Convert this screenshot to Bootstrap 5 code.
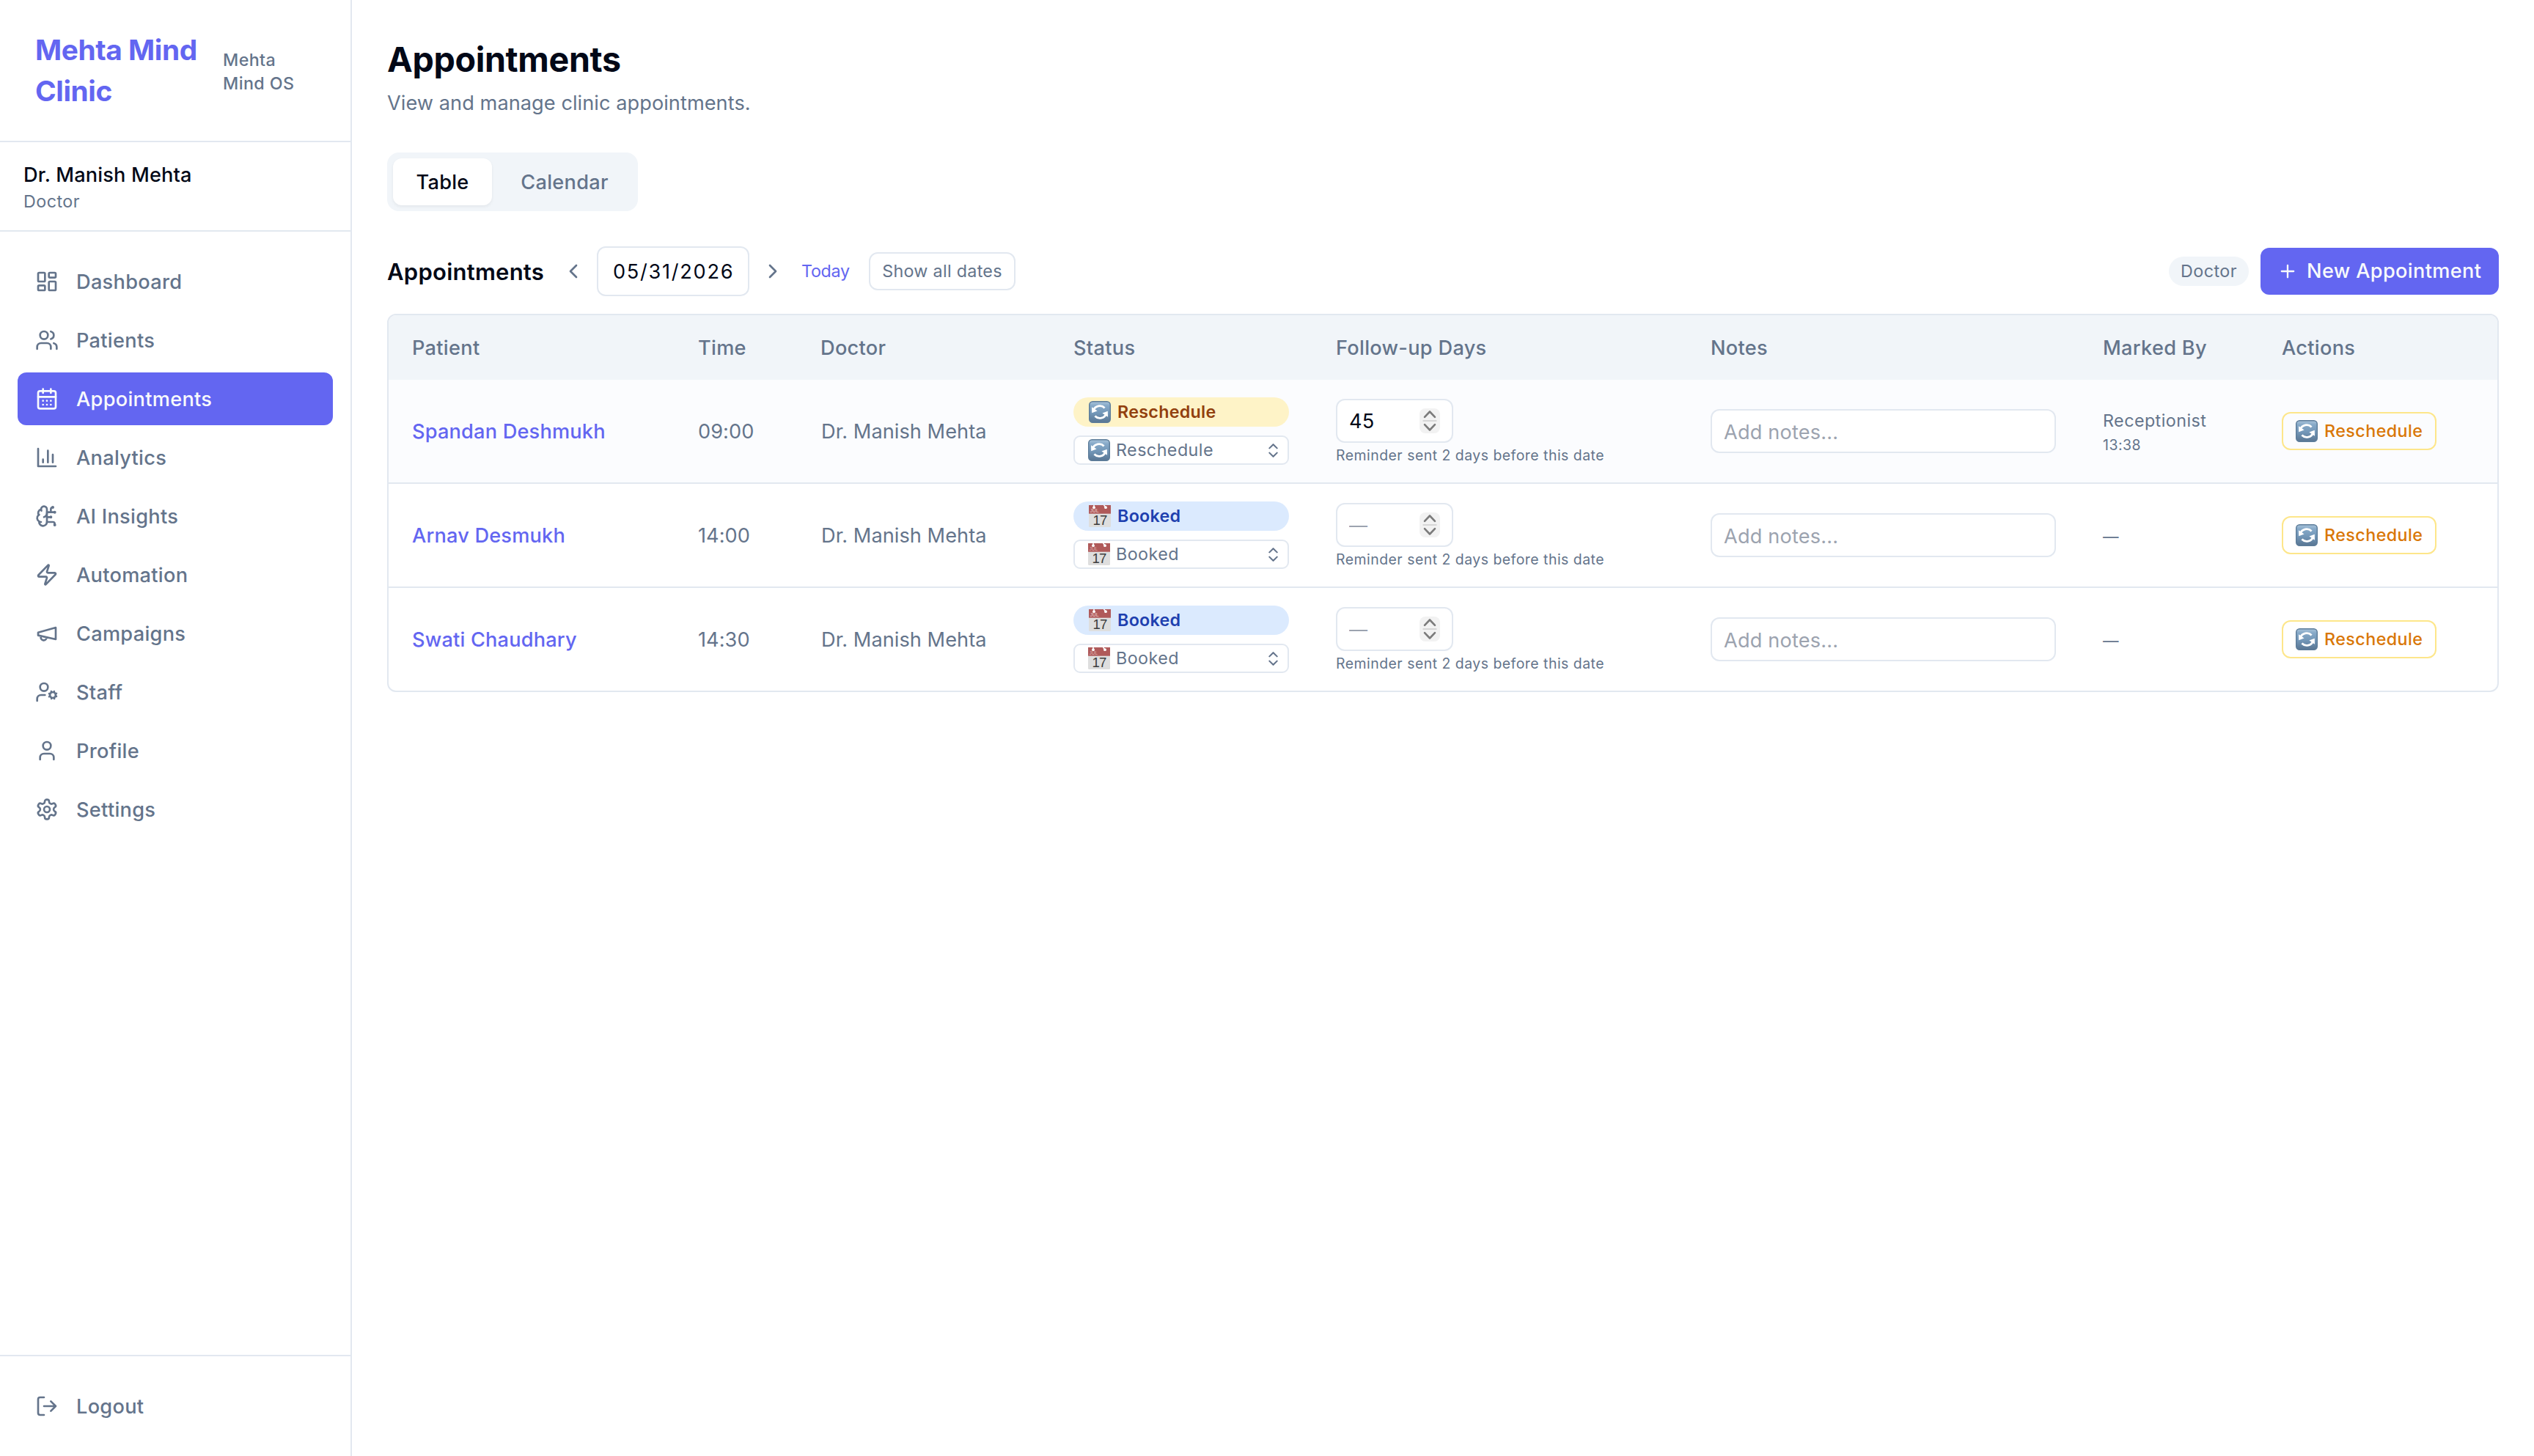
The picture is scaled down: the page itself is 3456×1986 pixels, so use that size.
<!DOCTYPE html>
<html lang="en">
<head>
<meta charset="utf-8">
<title>Appointments</title>
<link href="https://cdn.jsdelivr.net/npm/bootstrap@5.3.0/dist/css/bootstrap.min.css" rel="stylesheet">
<style>
:root{--line:#e2e8f0;--muted:#64748b;--ink:#020817;--brand:#6366f1;--soft:#f1f5f9}
body{font-family:Inter,"Liberation Sans",sans-serif;color:var(--ink);background:#fff;font-size:27.16px;line-height:40px;letter-spacing:.002em}
.ico{fill:none;stroke:currentColor;stroke-width:2;stroke-linecap:round;stroke-linejoin:round;flex:none;display:block}
.i32{width:32px;height:32px}
.i28{width:28px;height:28px}
.i25{width:25px;height:25px}
.emo{width:30px;height:30px;flex:none;display:block}
.t-muted{color:var(--muted)}
.t-med{font-weight:500;letter-spacing:.011em}
.t-xs{font-size:23.28px;line-height:32px;letter-spacing:.02em}
.t-xxs{font-size:19.4px;letter-spacing:.0262em;white-space:nowrap}
.side{width:480px;border-right:2px solid var(--line)}
.side-head{padding:40px 48px;border-bottom:2px solid var(--line)}
.brand-name{width:239px;font-size:38.8px;line-height:56px;font-weight:700;letter-spacing:-.0104em;color:var(--brand)}
.brand-sub{font-weight:500;padding:3px 0 0 1px;letter-spacing:.017em}
.side-user{padding:25px 32px 23px;border-bottom:2px solid var(--line)}
.side-menu{padding:32px 24px;gap:8px}
.side-foot{padding:32px 24px;border-top:2px solid var(--line)}
.side .nav-link{height:72px;padding:2px 24px 0;gap:24px;border-radius:12px;color:var(--muted)}
.side .nav-link .ico{margin-top:-2px}
.side .nav-link.active{background:var(--brand);color:#f8fafc}
.main-area{padding:48px}
h1.page-title{font-size:46.56px;line-height:64px;font-weight:700;letter-spacing:-.007em;padding-top:1px;margin-bottom:8px}
.lead-in{margin-bottom:47px}
.tabs-box{width:342px;height:80px;padding:8px;gap:7px;border-radius:16px;background:var(--soft)}
.tabs-box .btn{height:64px;padding:2px 0 0;border:0;border-radius:12px;font-size:inherit;line-height:40px;color:var(--muted)}
.tabs-box .tab-a{width:135px}
.tabs-box .tab-b{width:184px}
.tabs-box .btn.active{background:#fff;color:var(--ink);box-shadow:0 2px 4px rgba(0,0,0,.06)}
.toolbar{height:68px;margin-top:48px}
h2.sub-title{width:230px;font-size:31.04px;line-height:48px;font-weight:600;letter-spacing:.0075em;padding-top:2px;margin:0;white-space:nowrap}
.step{padding:8px;border:0;background:none;color:var(--muted)}
.form-control{font-size:27.16px;letter-spacing:.006em;color:var(--ink);border:2px solid var(--line);border-radius:12px;line-height:40px;background:#fff}
.form-control::placeholder{color:#9ca3af;opacity:1}
.date-in{width:208px;height:68px;padding:0 20px;letter-spacing:.063em;margin:0 8px}
.today-link{color:var(--brand);text-decoration:none;margin-left:15px;width:92px;letter-spacing:-.0115em}
.all-btn{height:52px;width:200px;padding:0;border:2px solid var(--line);border-radius:12px;color:var(--muted);letter-spacing:.0135em}
.role-chip{width:109px;height:40px;border-radius:20px;background:var(--soft);color:var(--muted);margin-right:16px}
.new-btn{width:325px;height:64px;padding:0 0 0 23px;gap:12px;border:0;border-radius:12px;background:var(--brand);color:#f8fafc;font-size:27.16px;letter-spacing:.013em;white-space:nowrap}
.grid-wrap{margin-top:24px;border:2px solid var(--line);border-radius:12px}
.grid-wrap .table{table-layout:fixed;border-collapse:separate;border-spacing:0;margin:0}
.grid-wrap .table>:not(caption)>*>*{padding:0 32px;border-bottom:2px solid var(--line);vertical-align:middle;background:none;box-shadow:none;color:var(--muted)}
.grid-wrap .table>thead>tr>th{height:88px;padding-top:2px;border-bottom:0!important;background:var(--soft)!important;font-weight:500}
.grid-wrap .table>tbody>tr>td{height:142px}
.grid-wrap .table>tbody>tr>td:nth-child(-n+3){padding-top:2px}
.grid-wrap .table>tbody>tr>td:nth-child(3){padding-left:33px}
.grid-wrap .table>tbody>tr:last-child>td{height:140px;border-bottom:0!important}
.grid-wrap .table>tbody>tr.hovered>td{background:#fbfcfe!important}
.grid-wrap .who{color:var(--brand);text-decoration:none;letter-spacing:.007em}
.stack{gap:12px}
.pill{height:40px;border-radius:20px;padding-left:21px;gap:9px;font-weight:600;letter-spacing:.0125em}
.pill-wait{background:#fef3c7;color:#92400e}
.pill-book{background:#dbeafe;color:#1e40af}
.pick{height:40px;border:2px solid var(--line);border-radius:9px;background:#fff;padding:0 7px 0 18px;gap:8px;color:var(--muted)}
.num-box{width:160px;height:60px}
.num-box .form-control{width:160px;height:60px;padding:0 16px}
.num-box .form-control::placeholder{letter-spacing:0;font-size:25px}
.spin{right:18px;top:13px;width:28px;height:34px}
.hint{margin-top:6px;line-height:22px}
.note-in{width:471px;height:60px;padding:2px 16px 0}
.mk-time{margin-top:5px;line-height:24px}
.mk-none{font-size:21.5px;padding-top:3px}
.act-btn{width:211px;height:52px;padding:0 0 0 17px;gap:9px;border:2px solid #fde68a;border-radius:12px;color:#d97706;font-weight:500;letter-spacing:.0195em}
</style>
</head>
<body>
<svg width="0" height="0" class="position-absolute">
<defs>
<linearGradient id="gBlue" x1="0" y1="0" x2="0" y2="1"><stop offset="0" stop-color="#a9c3da"/><stop offset=".2" stop-color="#86a9c8"/><stop offset=".55" stop-color="#7397b8"/><stop offset="1" stop-color="#587592"/></linearGradient>
<symbol id="emo-cycle" viewBox="0 0 30 30">
<rect x=".7" y=".7" width="28.6" height="28.6" rx="4.6" fill="url(#gBlue)" stroke="#5c7c99" stroke-width="1.4"/>
<path d="M6.200 12.800A9.300 9.300 0 0 1 21.600 9.400M23.800 17.200A9.300 9.300 0 0 1 8.400 20.600" fill="none" stroke="#fff" stroke-width="2.800"/>
<path d="M4 8.200 4.200 16.200 11.600 13.400ZM26 21.800 25.800 13.800 18.400 16.600Z" fill="#fff"/>
</symbol>
<symbol id="emo-cal" viewBox="0 0 30 30">
<path d="M0 11h30v17.500q0 1.500-1.500 1.500h-27Q0 30 0 28.500Z" fill="#dedede"/>
<path d="M0 0h30v11.700H0Z" fill="#b05a5a"/>
<circle cx="7" cy="3.200" r="1.900" fill="#fff"/><circle cx="23" cy="3.200" r="1.900" fill="#fff"/>
<path d="M7 3V0M23 3 20.500 0" stroke="#fff" stroke-width="1.500"/>
<text x="1.500" y="10.400" font-family="Liberation Sans" font-size="6.500" fill="#dcb0b0" letter-spacing="0">JUL</text>
<text x="5.600" y="27.200" font-family="Liberation Sans" font-size="18.600" font-weight="400" fill="#3c3c3c" style="letter-spacing:-1px">17</text>
</symbol>
<symbol id="updown" viewBox="0 0 24 24"><path d="m7 15 5 5 5-5M7 9l5-5 5 5"/></symbol>
<symbol id="spinner" viewBox="0 0 28 34"><rect width="28" height="34" rx="8" fill="#f2f2f2"/><path d="M4.500 17h19" stroke="#d6d6d6" stroke-width="2"/><path d="m7 11.800 7-7.300 7 7.300M7 22.200l7 7.300 7-7.300" fill="none" stroke="#7b7b7b" stroke-width="2.600" stroke-linecap="round" stroke-linejoin="round"/></symbol>
</defs>
</svg>

<div class="d-flex min-vh-100">
<aside class="side d-flex flex-column flex-shrink-0">
  <div class="side-head d-flex align-items-center gap-3">
    <div class="brand-name flex-shrink-0">Mehta Mind Clinic</div>
    <div class="t-xs t-muted brand-sub">Mehta<br>Mind&nbsp;OS</div>
  </div>
  <div class="side-user">
    <div class="t-med" style="letter-spacing:.006em">Dr. Manish Mehta</div>
    <div class="t-xs t-muted">Doctor</div>
  </div>
  <nav class="side-menu nav flex-column flex-nowrap flex-grow-1 t-med">
    <a class="nav-link d-flex align-items-center"><svg class="ico i32" viewBox="0 0 24 24"><rect width="7" height="9" x="3" y="3" rx="1"/><rect width="7" height="5" x="14" y="3" rx="1"/><rect width="7" height="9" x="14" y="12" rx="1"/><rect width="7" height="5" x="3" y="16" rx="1"/></svg>Dashboard</a>
    <a class="nav-link d-flex align-items-center"><svg class="ico i32" viewBox="0 0 24 24"><path d="M16 21v-2a4 4 0 0 0-4-4H6a4 4 0 0 0-4 4v2"/><circle cx="9" cy="7" r="4"/><path d="M22 21v-2a4 4 0 0 0-3-3.870M16 3.130a4 4 0 0 1 0 7.750"/></svg>Patients</a>
    <a class="nav-link active d-flex align-items-center"><svg class="ico i32" viewBox="0 0 24 24"><path d="M8 2v4M16 2v4"/><rect width="18" height="18" x="3" y="4" rx="2"/><path d="M3 10h18M8 14h.01M12 14h.01M16 14h.01M8 18h.01M12 18h.01M16 18h.01"/></svg>Appointments</a>
    <a class="nav-link d-flex align-items-center"><svg class="ico i32" viewBox="0 0 24 24"><path d="M3 3v18h18M18 17V9M13 17V5M8 17v-3"/></svg>Analytics</a>
    <a class="nav-link d-flex align-items-center"><svg class="ico i32" viewBox="0 0 24 24"><path d="M12 5a3 3 0 1 0-5.997.125 4 4 0 0 0-2.526 5.770 4 4 0 0 0 .556 6.588A4 4 0 1 0 12 18Z"/><path d="M9 13a4.500 4.500 0 0 0 3-4M6.003 5.125A3 3 0 0 0 6.401 6.500M3.477 10.896a4 4 0 0 1 .585-.396M6 18a4 4 0 0 1-1.967-.516M12 13h4M12 18h6a2 2 0 0 1 2 2v1M12 8h8M16 8V5a2 2 0 0 1 2-2"/><circle cx="16" cy="13" r=".5"/><circle cx="18" cy="3" r=".5"/><circle cx="20" cy="21" r=".5"/><circle cx="20" cy="8" r=".5"/></svg>AI Insights</a>
    <a class="nav-link d-flex align-items-center"><svg class="ico i32" viewBox="0 0 24 24"><path d="M4 14a1 1 0 0 1-.780-1.630l9.900-10.200a.5.5 0 0 1 .860.460l-1.920 6.020A1 1 0 0 0 13 10h7a1 1 0 0 1 .780 1.630l-9.900 10.200a.5.5 0 0 1-.860-.460l1.920-6.020A1 1 0 0 0 11 14z"/></svg>Automation</a>
    <a class="nav-link d-flex align-items-center"><svg class="ico i32" viewBox="0 0 24 24"><path d="m3 11 18-5v12L3 14v-3zM11.600 16.800a3 3 0 1 1-5.800-1.600"/></svg>Campaigns</a>
    <a class="nav-link d-flex align-items-center"><svg class="ico i32" viewBox="0 0 24 24"><circle cx="18" cy="15" r="3"/><circle cx="9" cy="7" r="4"/><path d="M10 15H6a4 4 0 0 0-4 4v2M21.700 16.400l-.9-.3M15.200 13.900l-.9-.3M16.600 18.700l.3-.9M19.100 12.200l.3-.9M19.600 18.700l-.4-1M16.800 12.300l-.4-1M14.300 16.600l1-.4M20.700 13.800l1-.4"/></svg>Staff</a>
    <a class="nav-link d-flex align-items-center"><svg class="ico i32" viewBox="0 0 24 24"><path d="M19 21v-2a4 4 0 0 0-4-4H9a4 4 0 0 0-4 4v2"/><circle cx="12" cy="7" r="4"/></svg>Profile</a>
    <a class="nav-link d-flex align-items-center"><svg class="ico i32" viewBox="0 0 24 24"><path d="M12.220 2h-.44a2 2 0 0 0-2 2v.18a2 2 0 0 1-1 1.730l-.43.25a2 2 0 0 1-2 0l-.15-.08a2 2 0 0 0-2.730.73l-.22.38a2 2 0 0 0 .73 2.730l.15.1a2 2 0 0 1 1 1.720v.51a2 2 0 0 1-1 1.740l-.15.09a2 2 0 0 0-.73 2.730l.22.38a2 2 0 0 0 2.730.73l.15-.08a2 2 0 0 1 2 0l.43.25a2 2 0 0 1 1 1.730V20a2 2 0 0 0 2 2h.44a2 2 0 0 0 2-2v-.18a2 2 0 0 1 1-1.730l.43-.25a2 2 0 0 1 2 0l.15.08a2 2 0 0 0 2.730-.73l.22-.39a2 2 0 0 0-.73-2.730l-.15-.08a2 2 0 0 1-1-1.740v-.5a2 2 0 0 1 1-1.740l.15-.09a2 2 0 0 0 .73-2.730l-.22-.38a2 2 0 0 0-2.730-.73l-.15.08a2 2 0 0 1-2 0l-.43-.25a2 2 0 0 1-1-1.730V4a2 2 0 0 0-2-2z"/><circle cx="12" cy="12" r="3"/></svg>Settings</a>
  </nav>
  <div class="side-foot t-med">
    <a class="nav-link d-flex align-items-center"><svg class="ico i32" viewBox="0 0 24 24"><path d="M9 21H5a2 2 0 0 1-2-2V5a2 2 0 0 1 2-2h4M16 17l5-5-5-5M21 12H9"/></svg>Logout</a>
  </div>
</aside>

<main class="main-area flex-grow-1">
  <h1 class="page-title">Appointments</h1>
  <div class="t-muted lead-in">View and manage clinic appointments.</div>
  <div class="tabs-box d-flex t-med">
    <button class="btn active tab-a t-med">Table</button>
    <button class="btn tab-b t-med">Calendar</button>
  </div>
  <div class="toolbar d-flex align-items-center">
    <h2 class="sub-title">Appointments</h2>
    <button class="step"><svg class="ico i32" viewBox="0 0 24 24"><path d="m15 18-6-6 6-6"/></svg></button>
    <input class="form-control date-in" type="text" value="05/31/2026">
    <button class="step"><svg class="ico i32" viewBox="0 0 24 24"><path d="m9 18 6-6-6-6"/></svg></button>
    <a class="today-link t-xs">Today</a>
    <button class="btn all-btn t-xs">Show all dates</button>
    <span class="role-chip t-xs ms-auto d-flex align-items-center justify-content-center">Doctor</span>
    <button class="btn new-btn t-med d-flex align-items-center"><svg class="ico i28" viewBox="0 0 24 24"><path d="M5 12h14M12 5v14"/></svg>New Appointment</button>
  </div>

  <div class="grid-wrap overflow-hidden">
  <table class="table">
    <colgroup><col style="width:390px"><col style="width:167px"><col style="width:345px"><col style="width:358px"><col style="width:511px"><col style="width:535px"><col style="width:244px"><col style="width:326px"></colgroup>
    <thead><tr class="t-med"><th>Patient</th><th>Time</th><th>Doctor</th><th>Status</th><th>Follow-up Days</th><th>Notes</th><th>Marked By</th><th>Actions</th></tr></thead>
    <tbody>
    <tr class="hovered">
      <td><a class="who t-med">Spandan Deshmukh</a></td><td>09:00</td><td>Dr. Manish Mehta</td>
      <td><div class="stack d-flex flex-column"><div class="pill pill-wait t-xs d-flex align-items-center"><svg class="emo"><use href="#emo-cycle"/></svg>Reschedule</div><div class="pick t-xs d-flex align-items-center"><svg class="emo"><use href="#emo-cycle"/></svg>Reschedule<svg class="ico i25 ms-auto"><use href="#updown"/></svg></div></div></td>
      <td><div class="num-box position-relative"><input class="form-control" type="text" value="45"><svg class="spin position-absolute"><use href="#spinner"/></svg></div><div class="hint t-xxs">Reminder sent 2 days before this date</div></td>
      <td><input class="form-control note-in" type="text" placeholder="Add notes..."></td>
      <td><div class="t-xs">Receptionist</div><div class="mk-time t-xxs">13:38</div></td>
      <td><button class="btn act-btn t-xs d-flex align-items-center"><svg class="emo"><use href="#emo-cycle"/></svg>Reschedule</button></td>
    </tr>
    <tr>
      <td><a class="who t-med">Arnav Desmukh</a></td><td>14:00</td><td>Dr. Manish Mehta</td>
      <td><div class="stack d-flex flex-column"><div class="pill pill-book t-xs d-flex align-items-center"><svg class="emo"><use href="#emo-cal"/></svg>Booked</div><div class="pick t-xs d-flex align-items-center"><svg class="emo"><use href="#emo-cal"/></svg>Booked<svg class="ico i25 ms-auto"><use href="#updown"/></svg></div></div></td>
      <td><div class="num-box position-relative"><input class="form-control" type="text" placeholder="—"><svg class="spin position-absolute"><use href="#spinner"/></svg></div><div class="hint t-xxs">Reminder sent 2 days before this date</div></td>
      <td><input class="form-control note-in" type="text" placeholder="Add notes..."></td>
      <td><div class="t-xs mk-none">—</div></td>
      <td><button class="btn act-btn t-xs d-flex align-items-center"><svg class="emo"><use href="#emo-cycle"/></svg>Reschedule</button></td>
    </tr>
    <tr>
      <td><a class="who t-med">Swati Chaudhary</a></td><td>14:30</td><td>Dr. Manish Mehta</td>
      <td><div class="stack d-flex flex-column"><div class="pill pill-book t-xs d-flex align-items-center"><svg class="emo"><use href="#emo-cal"/></svg>Booked</div><div class="pick t-xs d-flex align-items-center"><svg class="emo"><use href="#emo-cal"/></svg>Booked<svg class="ico i25 ms-auto"><use href="#updown"/></svg></div></div></td>
      <td><div class="num-box position-relative"><input class="form-control" type="text" placeholder="—"><svg class="spin position-absolute"><use href="#spinner"/></svg></div><div class="hint t-xxs">Reminder sent 2 days before this date</div></td>
      <td><input class="form-control note-in" type="text" placeholder="Add notes..."></td>
      <td><div class="t-xs mk-none">—</div></td>
      <td><button class="btn act-btn t-xs d-flex align-items-center"><svg class="emo"><use href="#emo-cycle"/></svg>Reschedule</button></td>
    </tr>
    </tbody>
  </table>
  </div>
</main>
</div>
<script src="https://cdn.jsdelivr.net/npm/bootstrap@5.3.0/dist/js/bootstrap.bundle.min.js"></script>
</body>
</html>
